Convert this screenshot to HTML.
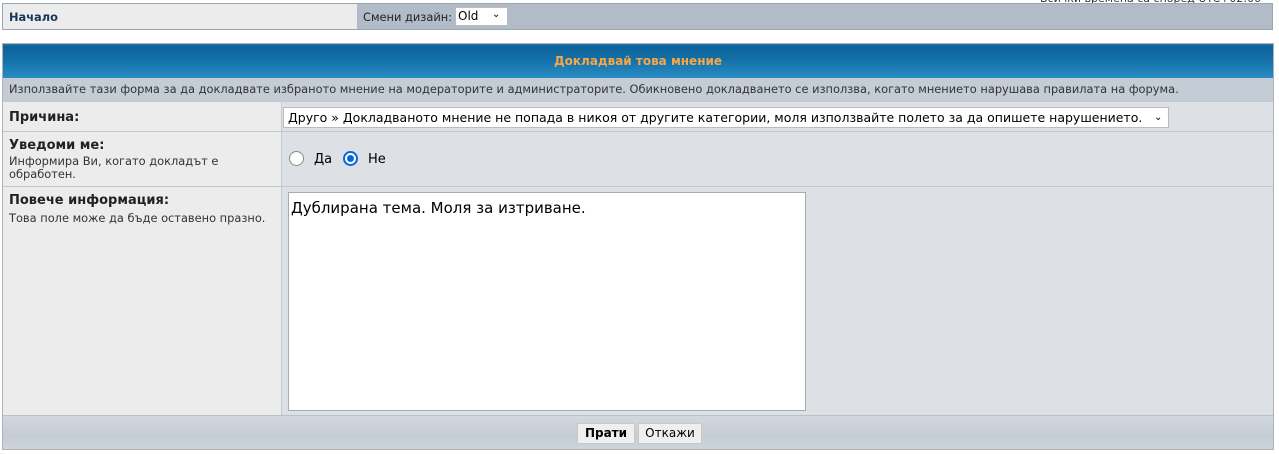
<!DOCTYPE html>
<html><head><meta charset="utf-8"><style>
body{margin:0;width:1279px;height:454px;background:#fff;font-family:Verdana,"DejaVu Sans","Liberation Sans",sans-serif;position:relative;overflow:hidden;font-size:11.4px;color:#000}
.a{position:absolute;box-sizing:border-box}
</style></head><body>
<div class="a" style="left:1040px;top:-8px;font-size:11px;color:#333">Всички времена са според UTC+02:00</div>
<div class="a" style="left:2px;top:3px;width:1271px;height:27px;border:1px solid #9aa6b2;background:#b2bcc8"></div>
<div class="a" style="left:3px;top:4px;width:354px;height:25px;background:#ececec"></div>
<div class="a" style="left:9px;top:10px;font-weight:bold;color:#18365a;font-size:11.4px">Начало</div>
<div class="a" style="left:363px;top:10px;color:#222">Смени дизайн:</div>
<div class="a" style="left:455px;top:7px;width:53px;height:19px;background:#fff;border:1px solid #bbb;font-size:12px;padding:1px 2px">Old <span style="position:absolute;left:36px;top:1px;font-size:10px">⌄</span></div>

<div class="a" style="left:2px;top:43px;width:1272px;height:407px;border:1px solid #aab2bc;background:#dde1e6"></div>
<div class="a" style="left:3px;top:44px;width:1270px;height:34px;background:linear-gradient(#2a7bb0 0,#0b6298 6%,#1572aa 50%,#2a8cc4 100%);color:#f5a84a;font-weight:bold;text-align:center;line-height:34px;font-size:12px">Докладвай това мнение</div>
<div class="a" style="left:3px;top:78px;width:1270px;height:23px;background:#c4ccd5;line-height:23px;padding-left:6px;color:#333">Използвайте тази форма за да докладвате избраното мнение на модераторите и администраторите. Обикновено докладването се използва, когато мнението нарушава правилата на форума.</div>

<div class="a" style="left:3px;top:101px;width:279px;height:314px;background:#ececec;border-right:1px solid #c4c9cf"></div>
<div class="a" style="left:3px;top:131px;width:1270px;height:1px;background:#c4c9cf"></div>
<div class="a" style="left:3px;top:186px;width:1270px;height:1px;background:#c4c9cf"></div>
<div class="a" style="left:3px;top:101px;width:1270px;height:1px;background:#c4c9cf"></div>

<div class="a" style="left:9px;top:110px;font-weight:bold;font-size:13px;color:#222">Причина:</div>
<div class="a" style="left:283px;top:107px;width:886px;height:21px;background:#fff;border:1px solid #bbb;font-size:12.5px;line-height:19px;padding-left:4px;white-space:nowrap">Друго » Докладваното мнение не попада в никоя от другите категории, моля използвайте полето за да опишете нарушението. <span style="position:absolute;left:870px;font-size:10px">⌄</span></div>

<div class="a" style="left:9px;top:138px;font-weight:bold;font-size:13px;color:#222">Уведоми ме:</div>
<div class="a" style="left:9px;top:155px;color:#333;line-height:13px;width:240px">Информира Ви, когато докладът е<br>обработен.</div>
<div class="a" style="left:289px;top:151px;width:15px;height:15px;border-radius:50%;border:1px solid #888;background:#fff"></div>
<div class="a" style="left:314px;top:152px;font-size:13px">Да</div>
<div class="a" style="left:343px;top:151px;width:15px;height:15px;border-radius:50%;border:2px solid #0a66d8;background:#fff"><div class="a" style="left:2px;top:2px;width:7px;height:7px;border-radius:50%;background:#0a66d8"></div></div>
<div class="a" style="left:368px;top:152px;font-size:13px">Не</div>

<div class="a" style="left:9px;top:193px;font-weight:bold;font-size:13px;color:#222">Повече информация:</div>
<div class="a" style="left:9px;top:211px;color:#333">Това поле може да бъде оставено празно.</div>
<div class="a" style="left:288px;top:192px;width:518px;height:219px;background:#fff;border:1px solid #aaa;font-size:15px;padding:6px 2px">Дублирана тема. Моля за изтриване.</div>

<div class="a" style="left:3px;top:415px;width:1270px;height:34px;border-top:1px solid #b8c0c8;background:linear-gradient(#d2d8de,#c4ccd4 60%,#ced4da)"></div>
<div class="a" style="left:577px;top:423px;width:58px;height:21px;background:#efefef;border:1px solid #c8c8c8;font-weight:bold;font-size:12px;text-align:center;line-height:19px">Прати</div>
<div class="a" style="left:638px;top:423px;width:64px;height:21px;background:#efefef;border:1px solid #c8c8c8;font-size:12px;text-align:center;line-height:19px">Откажи</div>
</body></html>
